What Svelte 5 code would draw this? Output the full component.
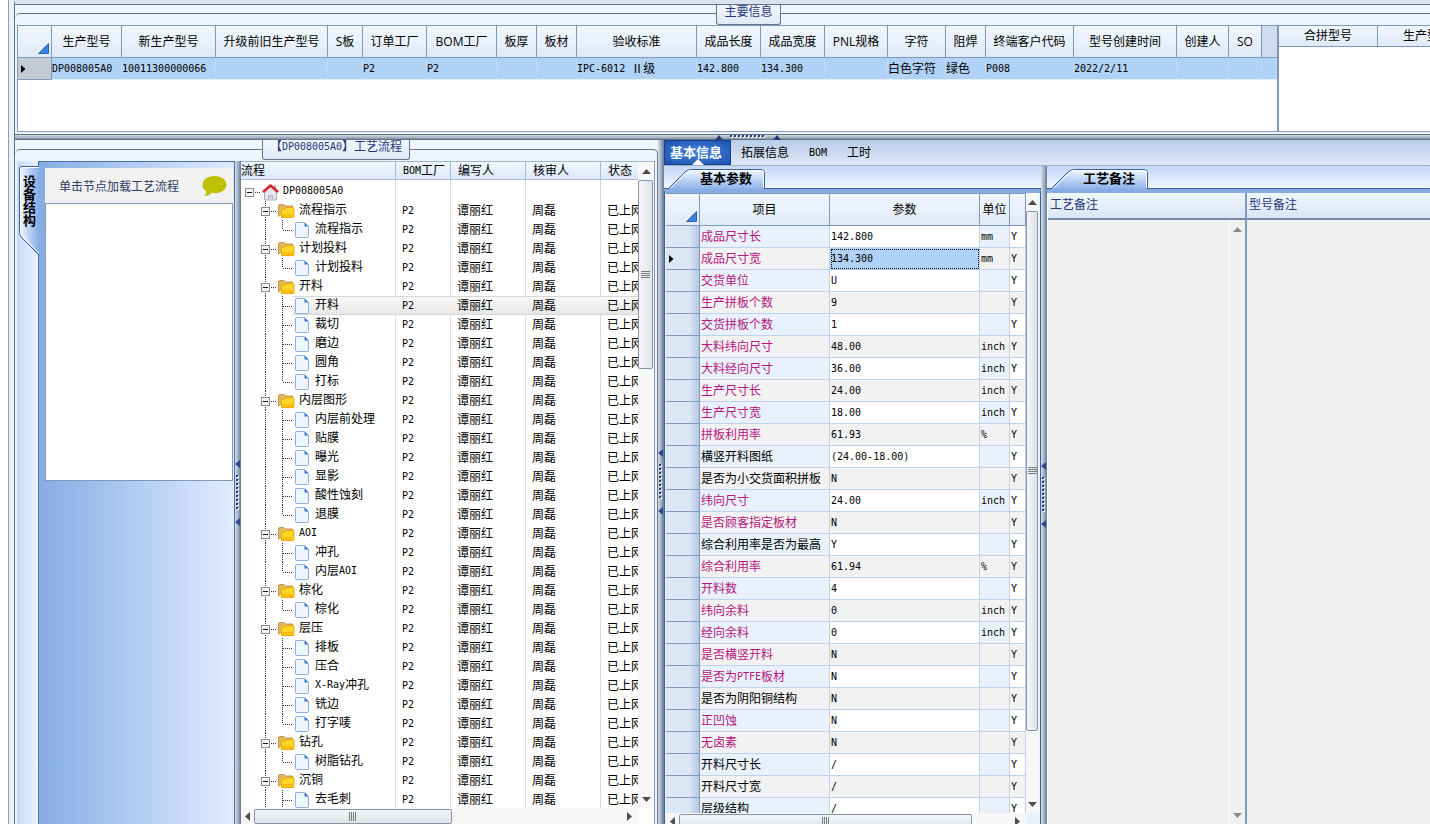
<script>
  const mainColumns = [
    { title: "生产型号", width: 70, value: "DP008005A0" },
    { title: "新生产型号", width: 94, value: "10011300000066" },
    { title: "升级前旧生产型号", width: 112, value: "" },
    { title: "S板", width: 35, value: "" },
    { title: "订单工厂", width: 64, value: "P2" },
    { title: "BOM工厂", width: 70, value: "P2" },
    { title: "板厚", width: 40, value: "" },
    { title: "板材", width: 40, value: "" },
    { title: "验收标准", width: 120, value: "IPC-6012 Ⅱ级" },
    { title: "成品长度", width: 64, value: "142.800" },
    { title: "成品宽度", width: 64, value: "134.300" },
    { title: "PNL规格", width: 63, value: "" },
    { title: "字符", width: 58, value: "白色字符" },
    { title: "阻焊", width: 40, value: "绿色" },
    { title: "终端客户代码", width: 88, value: "P008" },
    { title: "型号创建时间", width: 103, value: "2022/2/11" },
    { title: "创建人", width: 52, value: "" },
    { title: "SO", width: 33, value: "" },
  ];

  const flow = [
    { name: "流程指示", steps: ["流程指示"] },
    { name: "计划投料", steps: ["计划投料"] },
    { name: "开料", steps: ["开料", "裁切", "磨边", "圆角", "打标"] },
    { name: "内层图形", steps: ["内层前处理", "贴膜", "曝光", "显影", "酸性蚀刻", "退膜"] },
    { name: "AOI", steps: ["冲孔", "内层AOI"] },
    { name: "棕化", steps: ["棕化"] },
    { name: "层压", steps: ["排板", "压合", "X-Ray冲孔", "铣边", "打字唛"] },
    { name: "钻孔", steps: ["树脂钻孔"] },
    { name: "沉铜", steps: ["去毛刺"], more: true },
  ];

  const treeRows = flow.flatMap((group) => [
    { level: 1, name: group.name },
    ...group.steps.map((name, i) => ({
      level: 2,
      name,
      last: i === group.steps.length - 1 && !group.more,
      selected: group.name === "开料" && name === "开料",
    })),
  ]);

  const params = [
    ["成品尺寸长", "142.800", "mm", true],
    ["成品尺寸宽", "134.300", "mm", true],
    ["交货单位", "U", "", true],
    ["生产拼板个数", "9", "", true],
    ["交货拼板个数", "1", "", true],
    ["大料纬向尺寸", "48.00", "inch", true],
    ["大料经向尺寸", "36.00", "inch", true],
    ["生产尺寸长", "24.00", "inch", true],
    ["生产尺寸宽", "18.00", "inch", true],
    ["拼板利用率", "61.93", "%", true],
    ["横竖开料图纸", "(24.00-18.00)", "", false],
    ["是否为小交货面积拼板", "N", "", false],
    ["纬向尺寸", "24.00", "inch", true],
    ["是否顾客指定板材", "N", "", true],
    ["综合利用率是否为最高", "Y", "", false],
    ["综合利用率", "61.94", "%", true],
    ["开料数", "4", "", true],
    ["纬向余料", "0", "inch", true],
    ["经向余料", "0", "inch", true],
    ["是否横竖开料", "N", "", true],
    ["是否为PTFE板材", "N", "", true],
    ["是否为阴阳铜结构", "N", "", false],
    ["正凹蚀", "N", "", true],
    ["无卤素", "N", "", true],
    ["开料尺寸长", "/", "", false],
    ["开料尺寸宽", "/", "", false],
    ["层级结构", "/", "", false],
  ];

  const tabs = ["基本信息", "拓展信息", "BOM", "工时"];
  let activeTab = $state(0);
  let currentParam = $state(1);

  // latin runs are set in the half-width face, the rest in the full-width one
  const runs = (text) => text.split(/([\x20-\x7e]+)/).filter((t) => t !== "");
  const isLatin = (text) => /^[\x20-\x7e]/.test(text);
</script>

{#snippet mixed(text)}
  {#each runs(text) as run}{#if isLatin(run)}<span class="half">{run}</span>{:else}{run}{/if}{/each}
{/snippet}

{#snippet arrow(dir)}
  <svg class="arrow" width="9" height="9" viewBox="0 0 9 9" aria-hidden="true">
    {#if dir === "up"}<path d="M0 7 4.500 2 9 7z" />{/if}
    {#if dir === "down"}<path d="M0 2h9L4.500 7z" />{/if}
    {#if dir === "left"}<path d="M7 0v9L2 4.500z" />{/if}
    {#if dir === "right"}<path d="M2 0v9l5-4.500z" />{/if}
  </svg>
{/snippet}

{#snippet vscroll(size)}
  <div class="vscroll">
    <button aria-label="向上滚动">{@render arrow("up")}</button>
    <div class="track"><div class="thumb" style="height: {size}%"><i></i></div></div>
    <button aria-label="向下滚动">{@render arrow("down")}</button>
  </div>
{/snippet}

{#snippet hscroll(size)}
  <div class="hscroll">
    <button aria-label="向左滚动">{@render arrow("left")}</button>
    <div class="track"><div class="thumb" style="width: {size}%"><i></i></div></div>
    <button aria-label="向右滚动">{@render arrow("right")}</button>
  </div>
{/snippet}

{#snippet vsplit()}
  <div class="vsplit">
    <svg width="6" height="66" viewBox="0 0 6 66" aria-hidden="true">
      <path d="M5 0v8L0 4zM5 58v8l-5-4z" fill="#2b4a8a" />
      <path d="M3 15v36" stroke="#fff" stroke-width="2" stroke-dasharray="2 2" stroke-dashoffset="-1" />
      <path d="M2 15v36" stroke="#27417c" stroke-width="2" stroke-dasharray="2 2" />
    </svg>
  </div>
{/snippet}

{#snippet corner()}
  <svg class="corner" width="11" height="11" viewBox="0 0 11 11" aria-hidden="true">
    <path d="M0.500 10.500h10v-10z" fill="#3f83e0" stroke="#2c62b8" />
  </svg>
{/snippet}

{#snippet pointer()}
  <svg width="5" height="8" viewBox="0 0 5 8" aria-hidden="true"><path d="M0 0v8l4.500-4z" fill="#000" /></svg>
{/snippet}

{#snippet expander(x)}
  <rect {x} y="6" width="8" height="8" transform="translate(.5 .5)" fill="#f4f4f4" stroke="#8b8b8b" />
  <path d="M{x + 2} 10.500h5" stroke="#111" />
{/snippet}

{#snippet folderTab(title)}
  <div class="strip">
    <button class="folder-tab">
      <svg width="97" height="20" viewBox="0 0 97 20" aria-hidden="true">
        <defs>
          <linearGradient id="tabfill" x2="0" y2="1">
            <stop offset="0" stop-color="#f4f9ff" />
            <stop offset="1" stop-color="#8db2e8" />
          </linearGradient>
        </defs>
        <path d="M0 20 17 3Q19.500.5 24 .5H93Q96.500.5 96.500 4V20" fill="url(#tabfill)" stroke="#3e5f98" />
        <path d="M3 19 18 4Q20.500 1.500 24 1.500H93Q95.500 1.500 95.500 4V19" fill="none" stroke="#fff" />
      </svg>
      <span>{title}</span>
    </button>
  </div>
{/snippet}

<div class="app">
  <div class="rail"></div>
  <div class="content">
    <section class="main-info">
      <h2 class="group-title"><span>主要信息</span></h2>
      <div class="grids">
        <div class="grid-left">
          <table class="main-grid">
            <colgroup>
              <col style="width: 34px" />
              {#each mainColumns as column}<col style="width: {column.width}px" />{/each}
              <col style="width: 15px" />
            </colgroup>
            <thead>
              <tr>
                <th class="pick">{@render corner()}</th>
                {#each mainColumns as column}<th>{column.title}</th>{/each}
                <th class="rest"></th>
              </tr>
            </thead>
            <tbody>
              <tr>
                <td class="marker">{@render pointer()}</td>
                {#each mainColumns as column}<td>{@render mixed(column.value)}</td>{/each}
                <td></td>
              </tr>
            </tbody>
          </table>
        </div>
        <div class="grid-right">
          <table class="merge-grid">
            <thead>
              <tr><th>合拼型号</th><th>生产型号</th></tr>
            </thead>
          </table>
        </div>
      </div>
    </section>

    <div class="hsplit">
      <svg width="66" height="5" viewBox="0 0 66 5" aria-hidden="true">
        <path d="M0 5h8L4 0zM58 5h8l-4-5z" fill="#2b3a6e" />
        <path d="M15 2h36" stroke="#fff" stroke-width="2" stroke-dasharray="2 2" stroke-dashoffset="-1" />
        <path d="M15 1h36" stroke="#27417c" stroke-width="2" stroke-dasharray="2 2" />
      </svg>
    </div>

    <div class="lower">
      <section class="process">
        <h2 class="group-title"><span>{@render mixed("【DP008005A0】工艺流程")}</span></h2>
        <div class="process-body">
          <div class="side-strip">
            <button class="side-tab">
              <svg width="20" height="90" viewBox="0 0 20 90" aria-hidden="true">
                <defs>
                  <linearGradient id="sidefill" x2="1" y2="0">
                    <stop offset="0" stop-color="#f4f9ff" />
                    <stop offset="1" stop-color="#86ace4" />
                  </linearGradient>
                </defs>
                <path d="M20 .5H3Q.5.5.5 3V66Q.5 69 3 72L20 89" fill="url(#sidefill)" stroke="#3e5f98" />
                <path d="M20 1.500H3.500Q1.500 1.500 1.500 4V66Q1.500 69 4 71L20 87" fill="none" stroke="#fff" />
              </svg>
              <span>设备结构</span>
            </button>
          </div>
          <div class="side-page">
            <div class="hint">
              <span>单击节点加载工艺流程</span>
              <svg width="25" height="21" viewBox="0 0 25 21" aria-hidden="true">
                <path d="M12.500 0C19.500 0 24.500 3.800 24.500 8.700S19.500 17 12.500 17C11.500 17 10.600 16.900 9.700 16.800C8 18.800 5.300 20 2 20.300C3.600 19 4.300 17.300 4.200 15.200C1.800 13.600.5 11.300.5 8.700C.5 3.800 5.500 0 12.500 0z" fill="#bfc000" />
              </svg>
            </div>
            <div class="side-list"></div>
          </div>
          {@render vsplit()}
          <div class="tree">
            <div class="tree-main">
              <div class="tree-view">
                <table class="tree-table">
                  <colgroup>
                    <col style="width: 155px" />
                    <col style="width: 55px" />
                    <col style="width: 75px" />
                    <col style="width: 75px" />
                    <col style="width: 75px" />
                  </colgroup>
                  <thead>
                    <tr>
                      <th>流程</th>
                      <th>{@render mixed("BOM工厂")}</th>
                      <th>编写人</th>
                      <th>核审人</th>
                      <th>状态</th>
                    </tr>
                  </thead>
                  <tbody>
                    <tr class="root">
                      <td>
                        <div class="node">
                          <svg width="42" height="19" viewBox="0 0 42 19" aria-hidden="true">
                            {@render expander(4)}
                            <path d="M14 10.500h5" stroke="#333" stroke-dasharray="1 1" />
                            <path d="M23.500 9v8q0 1 1 1h10q1 0 1-1V9l-6-5.500z" fill="#e6e6ee" stroke="#a9a9b8" />
                            <path d="M27.500 18v-4.500h4V18" fill="#d2d2dd" stroke="#b5b5c2" />
                            <path d="M33 3h2v4h-2z" fill="#b9b9c9" />
                            <path d="M22 10 29.500 3.500 37 10" fill="none" stroke="#d9222a" stroke-width="2.600" stroke-linejoin="round" />
                          </svg>
                          <span>{@render mixed("DP008005A0")}</span>
                        </div>
                      </td>
                      <td></td><td></td><td></td><td></td>
                    </tr>
                    {#each treeRows as row}
                      <tr class:selected={row.selected}>
                        <td>
                          <div class="node">
                            {#if row.level === 1}
                              <svg width="58" height="19" viewBox="0 0 58 19" aria-hidden="true">
                                <path d="M24.500 0v19" stroke="#333" stroke-dasharray="1 1" />
                                {@render expander(20)}
                                <path d="M30 10.500h5" stroke="#333" stroke-dasharray="1 1" />
                                <path d="M37.500 15.500V5q0-1.500 1.500-1.500h4l1.500 1.500h7v4" fill="#e0b95f" stroke="#c19a48" />
                                <path d="M40.500 16.500V9q0-1 1-1h2.500l1.500-1.500h6.500q1 0 1 1v8q0 1-1 1z" fill="#ffd526" stroke="#eda912" />
                                <path d="M41 13h11.500v3H41z" fill="#fdc00f" />
                              </svg>
                            {:else}
                              <svg width="74" height="19" viewBox="0 0 74 19" aria-hidden="true">
                                <path d="M24.500 0v19" stroke="#333" stroke-dasharray="1 1" />
                                <path d={row.last ? "M41.500 0v10" : "M41.500 0v19"} stroke="#333" stroke-dasharray="1 1" />
                                <path d="M42 10.500h9" stroke="#333" stroke-dasharray="1 1" />
                                <path d="M55.500 2.500h8l4 4V16.500q0 1-1 1H55.500q-1 0-1-1V3.500q0-1 1-1z" fill="#eef5ff" stroke="#8ab0e6" />
                                <path d="M63.500 2.500v4h4z" fill="#3f74cf" />
                              </svg>
                            {/if}
                            <span>{@render mixed(row.name)}</span>
                          </div>
                        </td>
                        <td><span class="half">P2</span></td>
                        <td>谭丽红</td>
                        <td>周磊</td>
                        <td>已上网</td>
                      </tr>
                    {/each}
                  </tbody>
                </table>
              </div>
              {@render vscroll(31)}
            </div>
            {@render hscroll(54)}
          </div>
        </div>
      </section>

      <div class="split-cell">{@render vsplit()}</div>

      <section class="detail">
        <nav class="tabs">
          {#each tabs as tab, i}
            <button class:active={activeTab === i} onclick={() => (activeTab = i)}>{@render mixed(tab)}</button>
          {/each}
        </nav>
        <div class="detail-body">
          <div class="params">
            {@render folderTab("基本参数")}
            <div class="params-page">
              <div class="params-main">
                <div class="params-view">
                  <table class="param-grid">
                    <colgroup>
                      <col style="width: 34px" />
                      <col style="width: 130px" />
                      <col style="width: 150px" />
                      <col style="width: 30px" />
                      <col />
                    </colgroup>
                    <thead>
                      <tr>
                        <th class="pick">{@render corner()}</th>
                        <th>项目</th>
                        <th>参数</th>
                        <th>单位</th>
                        <th></th>
                      </tr>
                    </thead>
                    <tbody>
                      {#each params as [name, value, unit, required], i}
                        <tr onclick={() => (currentParam = i)}>
                          <td class="marker">{#if currentParam === i}{@render pointer()}{/if}</td>
                          <td class="soft" class:required>{@render mixed(name)}</td>
                          <td class:current={currentParam === i}><span class="half">{value}</span></td>
                          <td class="soft"><span class="half">{unit}</span></td>
                          <td><span class="half">Y</span></td>
                        </tr>
                      {/each}
                    </tbody>
                  </table>
                </div>
                {@render vscroll(89)}
              </div>
              {@render hscroll(89)}
            </div>
          </div>
          {@render vsplit()}
          <div class="notes">
            {@render folderTab("工艺备注")}
            <div class="notes-page">
              <div class="note first">
                <label for="craft-note">工艺备注</label>
                <div class="note-body">
                  <textarea id="craft-note" readonly></textarea>
                  <div class="vscroll idle">
                    <button aria-label="向上滚动">{@render arrow("up")}</button>
                    <div class="track"></div>
                    <button aria-label="向下滚动">{@render arrow("down")}</button>
                  </div>
                </div>
              </div>
              <div class="note">
                <label for="model-note">型号备注</label>
                <div class="note-body"><textarea id="model-note" readonly></textarea></div>
              </div>
            </div>
          </div>
        </div>
      </section>
    </div>
  </div>
</div>

<style>
:global(body) {
  background: #fff;
  overflow: hidden;
}

.app {
  display: flex;
  height: 100vh;
  padding-left: 8px;
  font: 12px/16px "Liberation Sans", "Noto Sans CJK SC", sans-serif;
  color: #000;
  box-sizing: border-box;
}

.app * {
  box-sizing: border-box;
}

button {
  font: inherit;
  color: inherit;
  border: 0;
  padding: 0;
  background: none;
}

svg {
  display: block;
  flex: none;
}

.half {
  font-family: "DejaVu Sans Mono", monospace;
  font-size: 10px;
  line-height: 12px;
  vertical-align: 1px;
  white-space: pre;
}

.rail {
  flex: none;
  width: 6px;
  background: #eaf1f8;
  border-left: 1px solid #8d9db5;
}

.content {
  flex: 1;
  min-width: 0;
  display: flex;
  flex-direction: column;
  border-left: 1px solid #5f6f86;
  border-top: 4px solid #dae4f0;
}

table {
  border-collapse: separate;
  border-spacing: 0;
  table-layout: fixed;
}

th,
td {
  padding: 0;
  white-space: nowrap;
  overflow: hidden;
  text-align: left;
  font-weight: normal;
}

/* group boxes */
.main-info,
.process {
  position: relative;
  background: #eff5fc;
}

.main-info::before,
.process::before {
  content: "";
  position: absolute;
  left: 0;
  right: 0;
  top: 9px;
  bottom: 0;
  border-top: 1px solid #66748c;
  border-radius: 5px 5px 0 0;
}

.main-info::before {
  top: 8px;
  border-radius: 5px 0 0 0;
}

.main-info {
  flex: none;
  overflow: hidden;
  padding: 0 0 2px 2px;
  border-top: 1px solid #5f6f86;
  border-bottom: 1px solid #5f6f86;
}

.group-title {
  position: relative;
  display: flex;
  justify-content: center;
  height: 21px;
  margin: 0;
  font-size: 12px;
  font-weight: normal;
  color: #27367a;
}

.main-info .group-title {
  height: 20px;
  padding-left: 50px;
}

.group-title span:not(.half) {
  height: 20px;
  padding: 0 7px;
  line-height: 15px;
  border: 1px solid #66748c;
  border-top: 0;
  border-radius: 0 0 3px 3px;
  background: linear-gradient(#f2f7fd, #dfe9f5);
}

.grids {
  position: relative;
  display: flex;
  height: 107px;
  border: 1px solid #7f99ba;
  border-right: 0;
  background: #fff;
}

.grid-left {
  flex: none;
  border-right: 2px solid #7f99ba;
}

.grid-right {
  flex: 1;
  min-width: 0;
  overflow: hidden;
}

.main-grid {
  width: 1259px;
}

.main-grid th,
.merge-grid th,
.param-grid th {
  height: 32px;
  text-align: center;
  font-family: "Open Sans", "Noto Sans CJK SC", sans-serif;
  background: linear-gradient(#f1f6fd, #dfeaf8);
  border-right: 1px solid #7f99ba;
  border-bottom: 1px solid #7f99ba;
}

.main-grid th.rest {
  background: #cfdcef;
  border-right: 0;
}

.main-grid td {
  height: 22px;
  padding-top: 1px;
  background: #afd2f6;
  border-right: 1px solid #bcdaf8;
  border-bottom: 1px solid #e4f0fc;
}

.main-grid td.marker {
  padding-left: 3px;
  background: #c5cbd2;
  border-right: 1px solid #7f99ba;
  border-bottom: 1px solid #7f99ba;
}

.corner {
  margin: 14px 2px 0 auto;
}

.merge-grid th {
  width: 99px;
  height: 21px;
}

.merge-grid {
  width: 198px;
}

.hsplit {
  flex: none;
  display: flex;
  justify-content: center;
  height: 5px;
  padding-left: 50px;
  background: linear-gradient(#d5dde4, #8795a5);
  border-bottom: 1px solid #5f6f86;
}

.lower {
  flex: 1;
  min-height: 0;
  display: flex;
}

.process {
  flex: none;
  width: 643px;
  padding: 0 3px 0 2px;
  display: flex;
  flex-direction: column;
}

.process::before {
  border-right: 1px solid #66748c;
}

.process-body {
  position: relative;
  flex: 1;
  min-height: 0;
  display: flex;
}

.side-strip {
  flex: none;
  width: 21px;
  padding: 5px 0 0 2px;
  background: linear-gradient(90deg, #c5daf9, #eaf3ff);
}

.side-tab {
  position: relative;
  width: 20px;
  height: 90px;
  z-index: 1;
}

.side-tab svg {
  position: absolute;
  inset: 0;
}

.side-tab span {
  position: absolute;
  left: 1px;
  top: 9px;
  writing-mode: vertical-rl;
  font-size: 13px;
  font-weight: bold;
}

.side-page {
  flex: 1;
  min-width: 0;
  padding: 6px 1px 0 6px;
  border: 1px solid #4a6ea9;
  border-bottom: 0;
  background: linear-gradient(90deg, #86ace4, #e0ecfe);
}

.hint {
  display: flex;
  align-items: center;
  justify-content: space-between;
  height: 35px;
  padding: 2px 6px 0 14px;
  background: #f2f2f2;
  color: #2d3b62;
}

.side-list {
  height: 278px;
  background: #fff;
  border: 1px solid #7f99ba;
}

.vsplit {
  flex: none;
  width: 6px;
  display: flex;
  flex-direction: column;
  justify-content: center;
  background: linear-gradient(90deg, #d6dfe8, #a3b1c2 50%, #62789a);
}

.split-cell {
  display: flex;
}

/* process tree */
.tree {
  flex: none;
  width: 414px;
  display: flex;
  flex-direction: column;
  background: #fff;
  border-top: 1px solid #9db4d2;
  border-right: 1px solid #7f99ba;
}

.tree-main,
.params-main {
  flex: 1;
  min-height: 0;
  display: flex;
}

.tree-view,
.params-view {
  flex: 1;
  min-width: 0;
  overflow: hidden;
}

.tree-table {
  width: 435px;
}

.tree-table th {
  height: 18px;
  padding-left: 7px;
  background: linear-gradient(#f0f6fd, #dce8f8);
  border-right: 1px solid #a4bcdd;
  border-bottom: 1px solid #a4bcdd;
}

.tree-table th:first-child {
  padding-left: 0;
}

.tree-table td {
  height: 19px;
  padding-left: 6px;
  border-right: 1px solid #dcdcdc;
}

.tree-table .root td {
  height: 21px;
  padding-top: 1px;
}

.tree-table td:first-child {
  padding-left: 0;
}

.tree-table .selected td {
  border-right-color: transparent;
  background: linear-gradient(#d8d8d8 1px, #fafafa 1px, #e6e6e6 18px, #d8d8d8 18px) border-box;
}

.tree-table .selected td:first-child {
  background:
    linear-gradient(90deg, #fff 52px, transparent 52px) border-box,
    linear-gradient(#d8d8d8 1px, #fafafa 1px, #e6e6e6 18px, #d8d8d8 18px) border-box;
}

.node {
  display: flex;
  height: 19px;
  line-height: 18px;
}

.vscroll {
  flex: none;
  width: 16px;
  display: flex;
  flex-direction: column;
  background: #f7f7f7;
}

.hscroll {
  flex: none;
  height: 16px;
  margin-right: 16px;
  display: flex;
  background: #f7f7f7;
}

.vscroll button,
.hscroll button {
  flex: none;
  display: flex;
  align-items: center;
  justify-content: center;
}

.vscroll button {
  height: 18px;
}

.hscroll button {
  width: 13px;
}

.hscroll button:last-child {
  width: 18px;
}

.arrow {
  fill: #4d4d4d;
}

.track {
  flex: 1;
}

.thumb {
  display: flex;
  align-items: center;
  justify-content: center;
  background: #e9edf2;
  border: 1px solid #8995a7;
  border-radius: 2px;
}

.vscroll .thumb {
  margin: 0 1px 0 0;
  background: linear-gradient(90deg, #f3f5f8, #dfe4ea);
}

.hscroll .thumb {
  height: 15px;
  margin-top: 1px;
  background: linear-gradient(#f3f5f8, #dfe4ea);
}

.vscroll i {
  width: 9px;
  height: 7px;
  background: repeating-linear-gradient(#7b7b7b 0 1px, transparent 1px 2px);
}

.hscroll i {
  width: 7px;
  height: 9px;
  background: repeating-linear-gradient(90deg, #7b7b7b 0 1px, transparent 1px 2px);
}

/* right side */
.detail {
  flex: 1;
  min-width: 0;
  display: flex;
  flex-direction: column;
}

.tabs {
  flex: none;
  display: flex;
  height: 26px;
  background: linear-gradient(#b9cce8, #dde8f6);
  border-bottom: 1px solid #a3b4c6;
}

.tabs button {
  position: relative;
  padding: 0 10px;
  line-height: 22px;
}

.tabs .active {
  padding: 0 8px 0 5px;
  border: 1px solid #123f8f;
  font-size: 13px;
  font-weight: bold;
  color: #fff;
  background: radial-gradient(#4a86dd, #1a51ae);
}

.tabs .active::after {
  content: "";
  position: absolute;
  left: 50%;
  bottom: -1px;
  margin-left: -6px;
  border: 6px solid transparent;
  border-top: 0;
  border-bottom-color: #fff;
}

.detail-body {
  flex: 1;
  min-height: 0;
  display: flex;
}

.params {
  flex: none;
  width: 377px;
  display: flex;
  flex-direction: column;
}

.strip {
  flex: none;
  height: 23px;
  padding: 3px 0 0 4px;
  background: linear-gradient(#c2d7fa, #f0f6ff);
  border-bottom: 1px solid #3e5f98;
}

.folder-tab {
  display: block;
  position: relative;
  width: 97px;
  height: 20px;
}

.folder-tab svg {
  position: absolute;
  inset: 0;
}

.folder-tab span {
  position: absolute;
  left: 32px;
  top: 0;
  line-height: 19px;
  font-size: 13px;
  font-weight: bold;
}

.params-page {
  flex: 1;
  min-height: 0;
  display: flex;
  flex-direction: column;
  padding: 0 1px 0 1px;
  margin-bottom: -5px;
  border-top: 4px solid #86ace4;
  border-right: 1px solid #3e5f98;
  border-left: 1px solid #3e5f98;
  background: #e9f1fb;
}

.param-grid {
  width: 100%;
  border-top: 1px solid #7f99ba;
}

.param-grid td {
  height: 22px;
  padding: 1px 0 0 1px;
  background: #fff;
  border-right: 1px solid #bcd2ee;
  border-bottom: 1px solid #bcd2ee;
}

.param-grid td.soft {
  background: #e8f1fc;
}

.param-grid tr:nth-child(even) td {
  background: #f2f2f2;
}

.param-grid tr td.marker,
.param-grid tr:nth-child(even) td.marker {
  padding-left: 3px;
  background: linear-gradient(90deg, #dae7f5 70%, #b4c7e4);
  border-right: 1px solid #7f99ba;
  border-bottom: 1px solid #7f99ba;
}

.param-grid tr td.current,
.param-grid tr:nth-child(even) td.current {
  background: #afd2f6;
  outline: 1px dotted #000;
  outline-offset: -2px;
}

.required {
  color: #b5177e;
}

.params .vscroll {
  width: 13px;
}

.params .hscroll {
  margin-right: 13px;
}

.notes {
  flex: 1;
  min-width: 0;
  display: flex;
  flex-direction: column;
}

.notes-page {
  flex: 1;
  min-height: 0;
  display: flex;
  padding-left: 1px;
  border-top: 4px solid #86ace4;
}

.note {
  flex: 1;
  min-width: 0;
  display: flex;
  flex-direction: column;
  background: #efefef;
}

.note.first {
  flex: none;
  width: 199px;
  border-right: 2px solid #7f99ba;
}

.note label {
  height: 27px;
  padding-left: 2px;
  line-height: 24px;
  color: #27367a;
  background: linear-gradient(#eff6fd, #d9e6f4);
  border-bottom: 2px solid #7389a6;
}

.note-body {
  flex: 1;
  min-height: 0;
  display: flex;
}

.note textarea {
  flex: 1;
  min-width: 0;
  padding: 2px;
  border: 0;
  resize: none;
  outline: none;
  background: #efefef;
  font: inherit;
}

.idle {
  background: #f0f0f0;
  border-left: 1px solid #fff;
}

.idle .arrow {
  fill: #8a8a8a;
}
</style>
